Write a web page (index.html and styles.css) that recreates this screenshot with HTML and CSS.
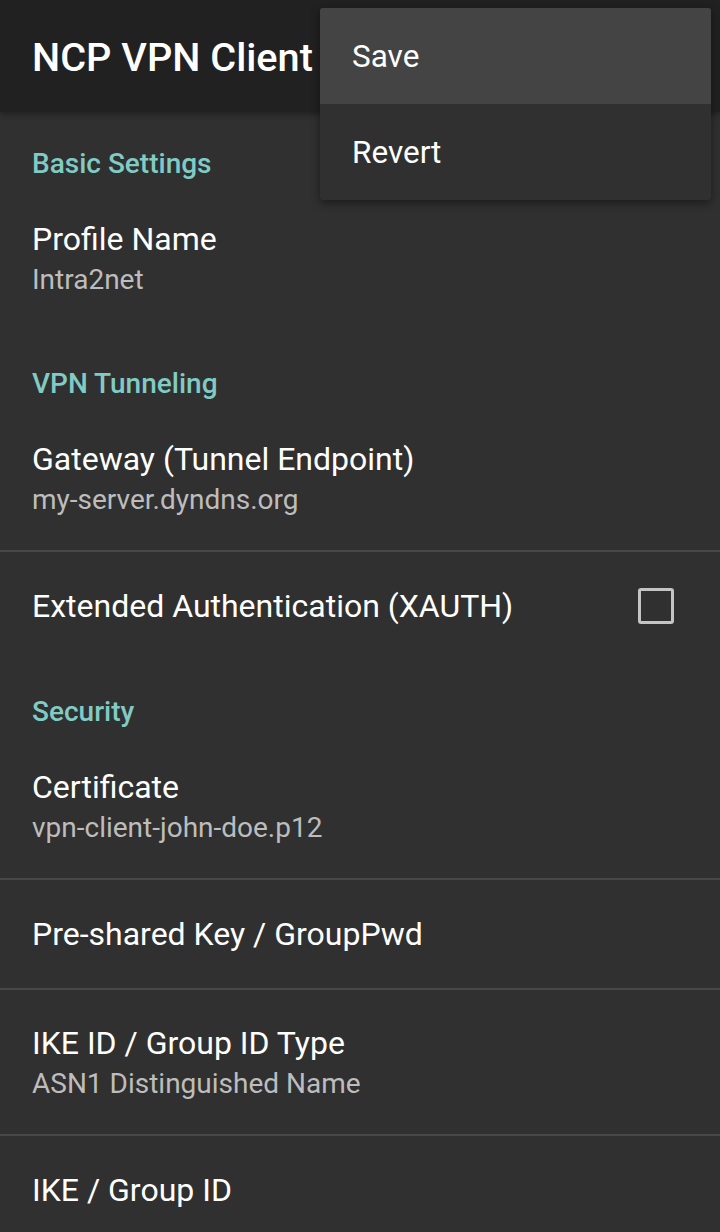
FILE: index.html
```html
<!DOCTYPE html>
<html>
<head>
<meta charset="utf-8">
<link rel="stylesheet" href="styles.css">
</head>
<body>
<div class="screen">
  <header class="appbar">
    <h1 class="appbar-title">NCP VPN Client</h1>
  </header>
  <main class="prefs">
    <div class="category">Basic Settings</div>
    <div class="item">
      <div class="title">Profile Name</div>
      <div class="summary">Intra2net</div>
    </div>
    <div class="category">VPN Tunneling</div>
    <div class="item divided">
      <div class="title">Gateway (Tunnel Endpoint)</div>
      <div class="summary">my-server.dyndns.org</div>
    </div>
    <div class="item single check-item">
      <div class="title">Extended Authentication (XAUTH)</div>
      <span class="checkbox"></span>
    </div>
    <div class="category">Security</div>
    <div class="item divided">
      <div class="title">Certificate</div>
      <div class="summary">vpn-client-john-doe.p12</div>
    </div>
    <div class="item single divided">
      <div class="title">Pre-shared Key / GroupPwd</div>
    </div>
    <div class="item divided">
      <div class="title">IKE ID / Group ID Type</div>
      <div class="summary">ASN1 Distinguished Name</div>
    </div>
    <div class="item single">
      <div class="title">IKE / Group ID</div>
    </div>
  </main>
  <div class="menu">
    <div class="menu-item active">Save</div>
    <div class="menu-item">Revert</div>
  </div>
</div>
</body>
</html>
```
FILE: styles.css
```css
html, body {
  margin: 0;
  padding: 0;
  background: #303030;
}
body {
  font-family: Roboto, "Liberation Sans", sans-serif;
  color: #ffffff;
}
.screen {
  position: relative;
  width: 720px;
  height: 1232px;
  overflow: hidden;
  background: #303030;
}
.appbar {
  height: 112px;
  background: #212121;
  display: flex;
  align-items: center;
  padding: 0 33px;
  box-shadow: 0 2px 6px rgba(0,0,0,0.35);
  position: relative;
  z-index: 1;
}
.appbar-title {
  margin: 0 0 0 -1px;
  font-size: 39.7px;
  font-weight: 500;
  color: #ffffff;
  letter-spacing: 0;
  line-height: 48px;
  padding-top: 4px;
}
.prefs {
  display: flex;
  flex-direction: column;
}
.category {
  padding: 32px 33px 2px 32px;
  height: 40px;
  line-height: 40px;
  font-size: 28px;
  font-weight: 500;
  color: #80cbc4;
}
.item {
  padding: 32px 33px 32px 32px;
  display: flex;
  flex-direction: column;
}
.item.divided {
  padding-bottom: 30px;
  border-bottom: 2px solid #484848;
}
.item .title {
  font-size: 32px;
  line-height: 42px;
  color: #ffffff;
}
.item .summary {
  font-size: 28px;
  line-height: 40px;
  color: #bdbdbd;
}
.item.single {
  height: 108px;
  padding-top: 0;
  padding-bottom: 0;
  box-sizing: border-box;
  justify-content: center;
}
.item.single.divided {
  height: 110px;
}
.check-item {
  flex-direction: row;
  align-items: center;
  justify-content: space-between !important;
}
.checkbox {
  width: 30px;
  height: 30px;
  border: 3px solid #c4c4c4;
  border-radius: 3px;
  margin-right: 13px;
  box-sizing: content-box;
}
.menu {
  position: absolute;
  top: 8px;
  left: 320px;
  width: 391px;
  background: #303030;
  border-radius: 3px;
  box-shadow: 0 3px 10px rgba(0,0,0,0.45);
  z-index: 2;
  overflow: hidden;
}
.menu-item {
  height: 96px;
  display: flex;
  align-items: center;
  padding: 0 33px 0 32px;
  font-size: 31.5px;
  color: #ffffff;
}
.menu-item.active {
  background: #444444;
}
```
